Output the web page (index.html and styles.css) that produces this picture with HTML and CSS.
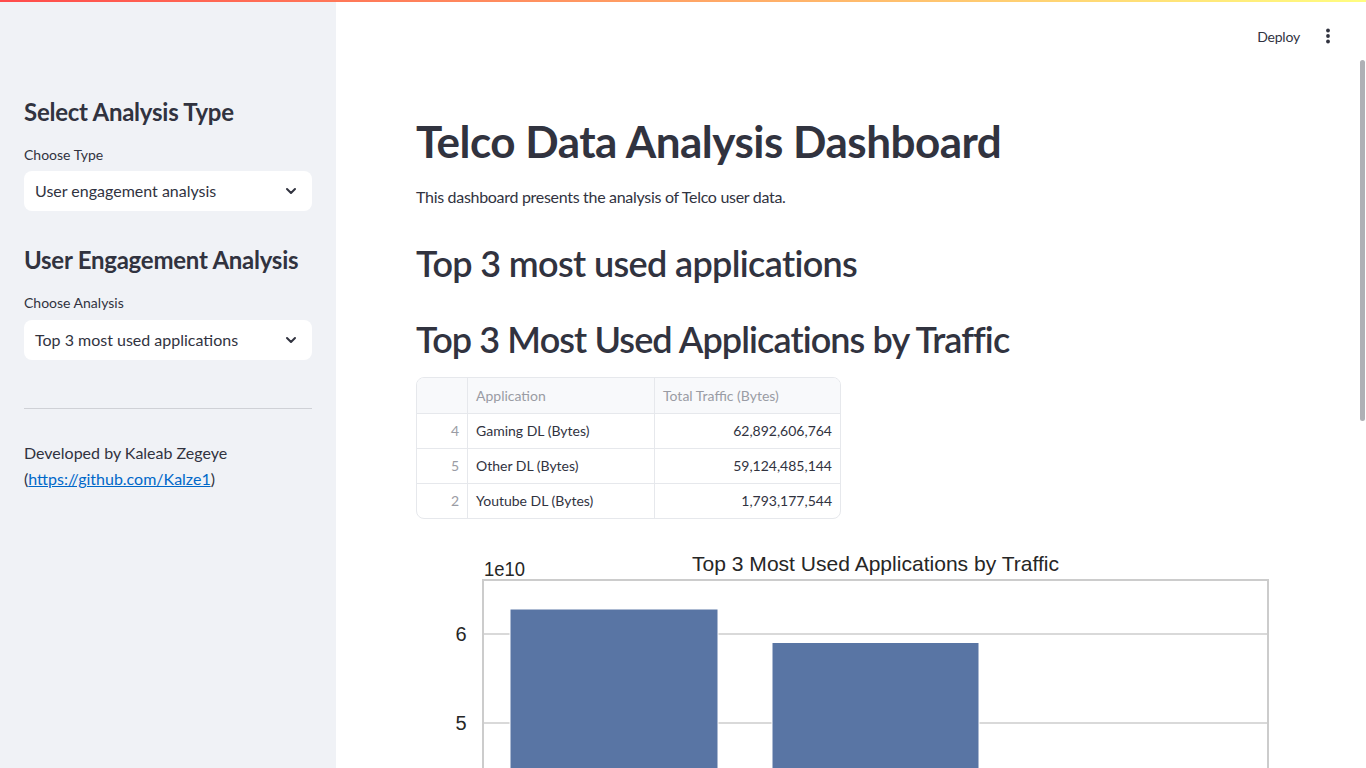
FILE: index.html
```html
<!DOCTYPE html>
<html lang="en">
<head>
<meta charset="utf-8">
<title>Telco Data Analysis Dashboard</title>
<link rel="stylesheet" href="styles.css">
</head>
<body>
<div class="decoration"></div>
<div class="app">
  <aside class="sidebar">
    <h2 class="side-title">Select Analysis Type</h2>
    <div class="field">
      <div class="label">Choose Type</div>
      <div class="select">
        <span>User engagement analysis</span>
        <svg class="chev" width="14" height="14" viewBox="0 0 14 14"><path d="M3 5 L7 9 L11 5" fill="none" stroke="#31333f" stroke-width="2" stroke-linecap="round" stroke-linejoin="round"/></svg>
      </div>
    </div>
    <h2 class="side-title second">User Engagement Analysis</h2>
    <div class="field">
      <div class="label">Choose Analysis</div>
      <div class="select">
        <span>Top 3 most used applications</span>
        <svg class="chev" width="14" height="14" viewBox="0 0 14 14"><path d="M3 5 L7 9 L11 5" fill="none" stroke="#31333f" stroke-width="2" stroke-linecap="round" stroke-linejoin="round"/></svg>
      </div>
    </div>
    <hr class="divider">
    <p class="credit">Developed by Kaleab Zegeye<br>(<a href="#">https://github.com/Kalze1</a>)</p>
  </aside>
  <main class="main">
    <header class="header">
      <span class="deploy">Deploy</span>
      <svg class="kebab" width="16" height="20" viewBox="0 0 16 20"><circle cx="8" cy="4.5" r="1.9" fill="#31333f"/><circle cx="8" cy="10" r="1.9" fill="#31333f"/><circle cx="8" cy="15.5" r="1.9" fill="#31333f"/></svg>
    </header>
    <section class="content">
      <h1 class="title">Telco Data Analysis Dashboard</h1>
      <p class="intro">This dashboard presents the analysis of Telco user data.</p>
      <h2 class="h2 first-h2">Top 3 most used applications</h2>
      <h2 class="h2 second-h2">Top 3 Most Used Applications by Traffic</h2>
      <div class="table">
        <div class="row head">
          <div class="cell idx"></div>
          <div class="cell">Application</div>
          <div class="cell">Total Traffic (Bytes)</div>
        </div>
        <div class="row">
          <div class="cell idx">4</div>
          <div class="cell">Gaming DL (Bytes)</div>
          <div class="cell num">62,892,606,764</div>
        </div>
        <div class="row">
          <div class="cell idx">5</div>
          <div class="cell">Other DL (Bytes)</div>
          <div class="cell num">59,124,485,144</div>
        </div>
        <div class="row">
          <div class="cell idx">2</div>
          <div class="cell">Youtube DL (Bytes)</div>
          <div class="cell num">1,793,177,544</div>
        </div>
      </div>
      <svg class="chart" width="870" height="300" viewBox="0 0 870 300">
        <text x="276" y="37" textLength="367" lengthAdjust="spacingAndGlyphs" class="ct">Top 3 Most Used Applications by Traffic</text>
        <text x="68" y="42" textLength="41" lengthAdjust="spacingAndGlyphs" class="ct">1e10</text>
        <line x1="67" y1="100" x2="852" y2="100" stroke="#cccccc" stroke-width="1.6"/>
        <line x1="67" y1="189" x2="852" y2="189" stroke="#cccccc" stroke-width="1.6"/>
        <rect x="94" y="75" width="208" height="240" fill="#5975a4" stroke="#ffffff" stroke-width="1"/>
        <rect x="356" y="108.5" width="207" height="240" fill="#5975a4" stroke="#ffffff" stroke-width="1"/>
        <rect x="67" y="46" width="785" height="300" fill="none" stroke="#cccccc" stroke-width="2"/>
        <text x="45" y="107" text-anchor="middle" class="tick">6</text>
        <text x="45" y="196" text-anchor="middle" class="tick">5</text>
      </svg>
    </section>
  </main>
</div>
<div class="scroll-thumb"></div>
</body>
</html>
```

FILE: styles.css
```css
html, body {
  margin: 0;
  padding: 0;
  height: 100%;
  overflow: hidden;
  background: #ffffff;
  font-family: Lato, "Noto Sans", sans-serif;
  color: #31333f;
}

.decoration {
  position: absolute;
  top: 0;
  left: 0;
  right: 0;
  height: 2px;
  background: linear-gradient(90deg, #ff4b4b, #fffd80);
  z-index: 5;
}

.app {
  display: flex;
  height: 100vh;
}

.sidebar {
  width: 336px;
  flex: 0 0 336px;
  box-sizing: border-box;
  background: #f0f2f6;
  padding: 98px 24px 0 24px;
}

.side-title {
  margin: 0;
  font-size: 24px;
  line-height: 28.8px;
  font-weight: 700;
  letter-spacing: -0.25px;
}

.side-title.second {
  margin-top: 35px;
}

.field {
  margin-top: 18px;
}

.label {
  font-size: 14px;
  line-height: 20px;
  height: 20px;
  margin-bottom: 6px;
}

.field + .side-title.second + .field .label {
  margin-bottom: 7px;
}

.select {
  height: 40px;
  background: #ffffff;
  border-radius: 8px;
  display: flex;
  align-items: center;
  justify-content: space-between;
  padding: 0 14px 0 11px;
  font-size: 16px;
}

.chev {
  display: block;
}

.divider {
  border: none;
  border-top: 1px solid #cfd1d6;
  margin: 48px 0 0 0;
}

.credit {
  margin: 31px 0 0 0;
  font-size: 16px;
  line-height: 26px;
}

.credit a {
  color: #0068c9;
}

.main {
  flex: 1;
  position: relative;
  overflow: hidden;
}

.header {
  height: 72px;
  display: flex;
  align-items: center;
  justify-content: flex-end;
  padding-right: 30px;
  gap: 20px;
}

.deploy {
  font-size: 14px;
  letter-spacing: -0.2px;
}

.kebab {
  display: block;
}

.content {
  padding: 0 80px;
}

.title {
  margin: 43px 0 0 0;
  font-size: 44px;
  line-height: 52.8px;
  font-weight: 700;
  letter-spacing: -0.5px;
}

.intro {
  margin: 16px 0 0 0;
  font-size: 16px;
  line-height: 25.6px;
  letter-spacing: -0.3px;
}

.h2 {
  margin: 33px 0 0 0;
  font-size: 36px;
  line-height: 43.2px;
  font-weight: 600;
}

.first-h2 {
  letter-spacing: -0.65px;
}

.second-h2 {
  margin-top: 32px;
  letter-spacing: -0.9px;
}

.table {
  margin-top: 16px;
  width: 425px;
  border: 1px solid #e6e8ec;
  border-radius: 8px;
  overflow: hidden;
  box-sizing: border-box;
  font-size: 14px;
}

.row {
  display: grid;
  grid-template-columns: 50px 187px 1fr;
  height: 35px;
  border-top: 1px solid #e6e8ec;
  box-sizing: border-box;
}

.row.head {
  border-top: none;
  height: 35px;
  background: #f8f9fb;
  color: #9a9ca4;
}

.cell {
  display: flex;
  align-items: center;
  padding: 0 8px;
  border-left: 1px solid #e6e8ec;
}

.cell.idx {
  border-left: none;
  justify-content: flex-end;
  color: #9a9ca4;
}

.cell.num {
  justify-content: flex-end;
}

.chart {
  display: block;
  margin-top: 15px;
}

.ct {
  font-family: "Liberation Sans", Arial, sans-serif;
  font-size: 21px;
  fill: #262626;
}

.tick {
  font-family: "Liberation Sans", Arial, sans-serif;
  font-size: 20px;
  fill: #262626;
}

.scroll-thumb {
  position: absolute;
  top: 60px;
  right: 1px;
  width: 5px;
  height: 361px;
  border-radius: 3px;
  background: #afb0b5;
}
```
